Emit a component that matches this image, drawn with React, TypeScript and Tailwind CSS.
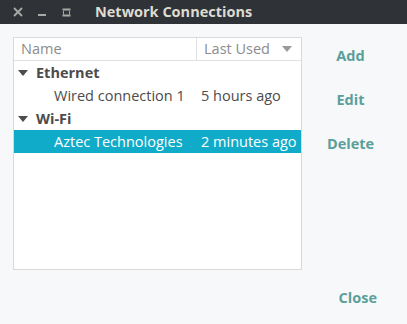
import React from "react";

type Row = { name: string; used?: string; group?: boolean; selected?: boolean };

const rows: Row[] = [
  { name: "Ethernet", group: true },
  { name: "Wired connection 1", used: "5 hours ago" },
  { name: "Wi-Fi", group: true },
  { name: "Aztec Technologies", used: "2 minutes ago", selected: true },
];

const Caret = ({ className }: { className?: string }) => (
  <svg width="10" height="6" viewBox="0 0 10 6" className={className}>
    <path d="M0 0 L10 0 L5 6 Z" fill="currentColor" />
  </svg>
);

const App: React.FC = () => {
  return (
    <div
      className="w-[407px] h-[324px] flex flex-col bg-[#f7f8f9] text-[14.5px] overflow-hidden"
      style={{ fontFamily: "'Open Sans', 'Noto Sans', sans-serif" }}
    >
      {/* title bar */}
      <div className="h-[24px] bg-[#2f3338] flex items-center text-[#a9aaa6]">
        <div className="w-[36px] flex justify-center">
          <svg width="10" height="10" viewBox="0 0 10 10">
            <path d="M1 1 L9 9 M9 1 L1 9" stroke="currentColor" strokeWidth="1.8" />
          </svg>
        </div>
        <div className="w-[12px] flex justify-center pt-[6px]">
          <div className="w-[8px] h-[2px] bg-current" />
        </div>
        <div className="w-[36px] flex justify-center">
          <svg width="9" height="9" viewBox="0 0 9 9">
            <rect x="0.5" y="0.5" width="8" height="2" fill="currentColor" />
            <rect x="0.5" y="6.5" width="8" height="2" fill="currentColor" />
            <rect x="1" y="3" width="1" height="3.5" fill="currentColor" />
            <rect x="7" y="3" width="1" height="3.5" fill="currentColor" />
          </svg>
        </div>
        <span className="ml-[11px] font-bold text-[#dfdbd2] text-[14.5px]">Network Connections</span>
      </div>

      <div className="flex flex-1">
        <div className="pl-[13px] pt-[13px]">
          <div className="w-[289px] h-[233px] bg-white border border-[#d9d9d9] flex flex-col">
            <div className="h-[23px] flex border-b border-[#e1e1e1] text-[#8c8c8c]">
              <div className="w-[182px] pl-[7px] flex items-center">Name</div>
              <div className="flex-1 border-l border-[#e1e1e1] pl-[7px] flex items-center justify-between pr-[9px]">
                <span>Last Used</span>
                <Caret className="text-[#9a9a9a]" />
              </div>
            </div>
            {rows.map((r, i) => (
              <div
                key={i}
                className={
                  "h-[23px] flex items-center " +
                  (r.selected ? "bg-[#10abc8] text-white" : "text-[#4c4c4c]")
                }
              >
                {r.group ? (
                  <div className="flex items-center pl-[4px] font-bold">
                    <Caret className="text-[#4c4c4c] mr-[8px]" />
                    {r.name}
                  </div>
                ) : (
                  <>
                    <div className="w-[187px] pl-[40px] whitespace-nowrap">{r.name}</div>
                    <div className="whitespace-nowrap">{r.used}</div>
                  </>
                )}
              </div>
            ))}
          </div>
        </div>
        <div className="flex-1 flex flex-col pr-[8px] pt-[10px] font-bold text-[#5b9f9b]">
          <div className="h-[44px] flex items-center justify-center">Add</div>
          <div className="h-[44px] flex items-center justify-center">Edit</div>
          <div className="h-[44px] flex items-center justify-center">Delete</div>
        </div>
      </div>
      <div className="h-[52px] flex items-center justify-end pr-[30px] font-bold text-[#5b9f9b]">
        Close
      </div>
    </div>
  );
};

export default App;
